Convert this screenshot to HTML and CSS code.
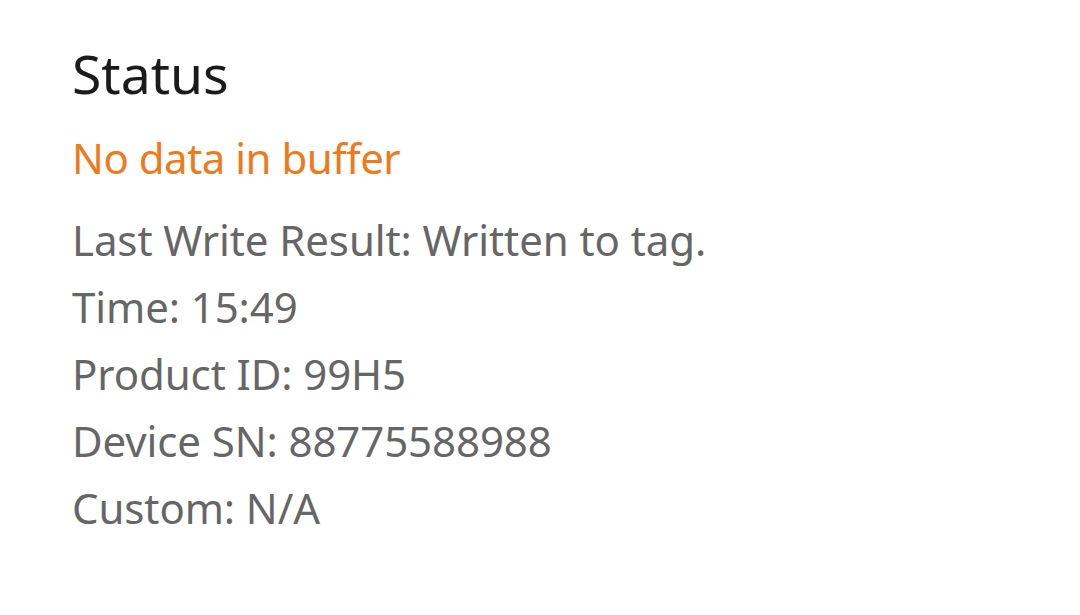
FILE: index.html
```html
<!DOCTYPE html>
<html>
<head>
<meta charset="utf-8">
<link rel="stylesheet" href="styles.css">
</head>
<body>
<main class="panel">
  <h1 class="title">Status</h1>
  <p class="buffer">No data in buffer</p>
  <ul class="details">
    <li>Last Write Result: Written to tag.</li>
    <li>Time: 15:49</li>
    <li>Product ID: 99H5</li>
    <li>Device SN: 88775588988</li>
    <li>Custom: N/A</li>
  </ul>
</main>
</body>
</html>
```
FILE: styles.css
```css
html, body {
  margin: 0;
  padding: 0;
  background: #ffffff;
}
body {
  font-family: "Noto Sans", Roboto, sans-serif;
  width: 1080px;
  height: 615px;
  overflow: hidden;
}
.panel {
  display: flex;
  flex-direction: column;
  padding: 40px 0 0 72px;
}
.title {
  margin: 0;
  font-size: 53.5px;
  font-weight: 400;
  line-height: 68px;
  color: #1b1b1b;
}
.buffer {
  margin: 15.5px 0 0;
  font-size: 42px;
  line-height: 67px;
  letter-spacing: -0.5px;
  color: #ef7a1c;
}
.details {
  list-style: none;
  margin: 15px 0 0;
  padding: 0;
  display: flex;
  flex-direction: column;
}
.details li {
  font-size: 42px;
  line-height: 67px;
  letter-spacing: -0.1px;
  color: #666666;
}
```
